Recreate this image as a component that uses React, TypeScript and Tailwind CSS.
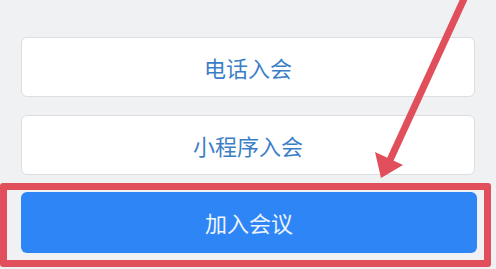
const cjk = { fontFamily: '"Noto Sans CJK SC", "Noto Sans", sans-serif' };

function OptionButton({ label }: { label: string }) {
  return (
    <button
      type="button"
      className="flex h-[60px] w-full items-center justify-center rounded-[6px] border border-[#dcdee2] bg-white text-[22px] text-[#3b7ec8]"
      style={cjk}
    >
      {label}
    </button>
  );
}

export default function App() {
  return (
    <div className="relative h-[269px] w-[496px] overflow-hidden bg-[#eff1f3] pt-[37px]">
      <div className="flex flex-col gap-[18px] px-[21px]">
        <OptionButton label="电话入会" />
        <OptionButton label="小程序入会" />
      </div>

      <div className="mr-[5px] mt-[8px] rounded-[3px] border-[7px] border-[#e04f5b] pb-[7px] pl-[14px] pr-[7px] pt-[2px]">
        <button
          type="button"
          className="flex h-[61px] w-full items-center justify-center rounded-[6px] bg-[#2e85f6] text-[22px] text-[#eef4fc]"
          style={cjk}
        >
          加入会议
        </button>
      </div>

      {/* annotation arrow */}
      <svg
        className="pointer-events-none absolute inset-0"
        width="496"
        height="269"
        viewBox="0 0 496 269"
      >
        <line x1="469" y1="-12" x2="390" y2="160" stroke="#e04f5b" strokeWidth="7" />
        <polygon points="381,178 375,152 403,165" fill="#e04f5b" />
      </svg>
    </div>
  );
}
